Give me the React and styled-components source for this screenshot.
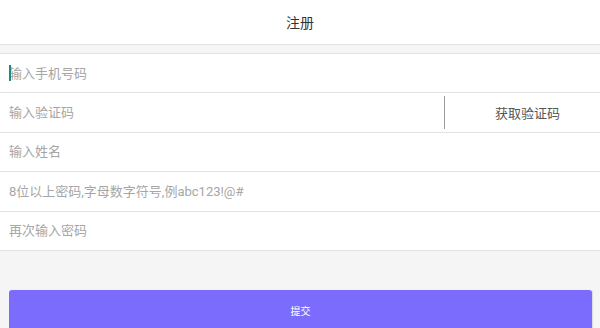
import React from "react";
import styled, { createGlobalStyle } from "styled-components";

const GlobalStyle = createGlobalStyle`
  html, body {
    margin: 0;
    padding: 0;
    background: #f5f5f5;
    font-family: Roboto, "Noto Sans CJK SC", sans-serif;
  }
  * { box-sizing: border-box; }
`;

const Page = styled.div`
  width: 600px;
  height: 328px;
  overflow: hidden;
  background: #f5f5f5;
`;

const Header = styled.header`
  height: 45px;
  background: #fff;
  border-bottom: 1px solid #e2e2e2;
  display: flex;
  align-items: center;
  justify-content: center;
  font-size: 14px;
  color: #333;
`;

const Form = styled.div`
  margin-top: 8px;
  background: #fff;
  border-top: 1px solid #e2e2e2;
`;

const Row = styled.div`
  position: relative;
  height: 39.4px;
  display: flex;
  align-items: center;
  border-bottom: 1px solid #e2e2e2;
`;

const Field = styled.input`
  flex: 1;
  min-width: 0;
  height: 100%;
  border: none;
  outline: none;
  background: transparent;
  padding: 0 9px;
  font-family: Roboto, "Noto Sans CJK SC", sans-serif;
  font-size: 13px;
  color: #333;
  &::placeholder {
    color: #a6a6a6;
  }
`;

const Caret = styled.span`
  position: absolute;
  left: 9px;
  top: 11px;
  width: 1.5px;
  height: 16px;
  background: #1d8a7e;
`;

const CodeButton = styled.button`
  width: 156px;
  height: 33px;
  border: none;
  border-left: 1px solid #999;
  background: transparent;
  font-family: Roboto, "Noto Sans CJK SC", sans-serif;
  font-size: 13px;
  color: #555;
  padding: 0 0 0 10px;
  cursor: pointer;
`;

const Submit = styled.button`
  display: block;
  margin: 39px 8px 0 9px;
  width: 583px;
  height: 44px;
  border: none;
  border-radius: 3px;
  background: #7b6cfd;
  box-shadow: 1px 0 1px rgba(0, 0, 0, 0.12);
  color: #fff;
  font-family: Roboto, "Noto Sans CJK SC", sans-serif;
  font-size: 10px;
  padding-bottom: 4px;
  cursor: pointer;
`;

export default function App() {
  return (
    <Page>
      <GlobalStyle />
      <Header>注册</Header>
      <Form>
        <Row>
          <Caret />
          <Field type="tel" placeholder="输入手机号码" />
        </Row>
        <Row>
          <Field type="text" placeholder="输入验证码" />
          <CodeButton>获取验证码</CodeButton>
        </Row>
        <Row>
          <Field type="text" placeholder="输入姓名" />
        </Row>
        <Row>
          <Field type="password" placeholder="8位以上密码,字母数字符号,例abc123!@#" />
        </Row>
        <Row>
          <Field type="password" placeholder="再次输入密码" />
        </Row>
      </Form>
      <Submit>提交</Submit>
    </Page>
  );
}
